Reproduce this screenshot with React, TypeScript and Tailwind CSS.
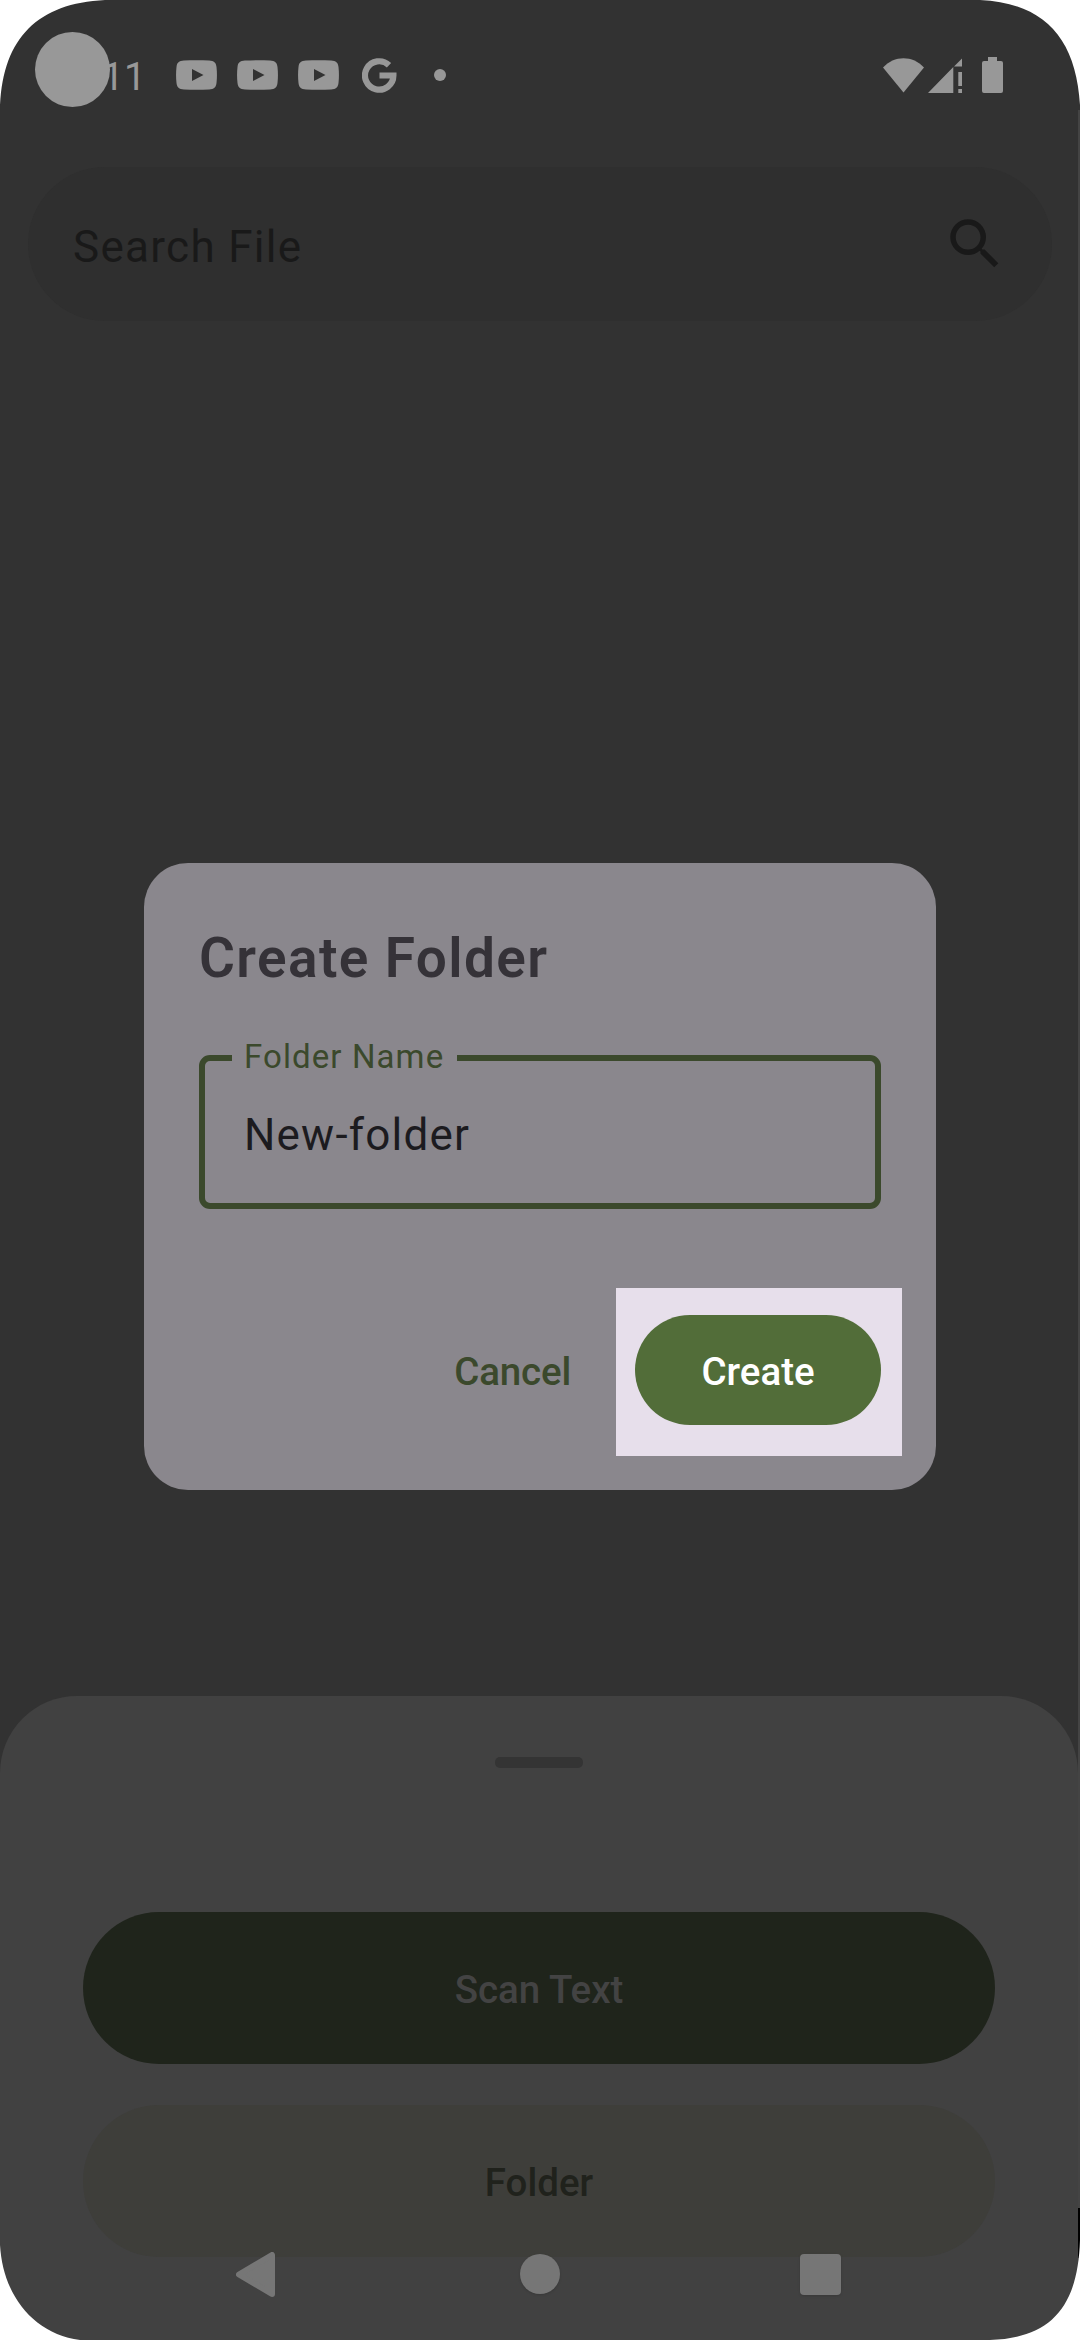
import type { ReactNode } from "react";

const YouTubeIcon = () => (
  <svg className="h-[30px] w-[41px]" viewBox="0 0 41 30" fill="#989898">
    <path
      fillRule="evenodd"
      d="M8 .6C16 0 25 0 33 .6c5 .3 7 2 7.500 6.400.6 5 .6 11 0 16-.5 4.400-2.500 6.100-7.500 6.400-8 .6-17 .6-25 0-5-.3-7-2-7.500-6.400-.6-5-.6-11 0-16C1 2.600 3 .9 8 .6ZM16 9v12l11.500-6Z"
    />
  </svg>
);

const GoogleIcon = () => (
  <svg className="h-[35px] w-[35px]" viewBox="0 0 35 35" fill="none" stroke="#989898" strokeWidth="6.200">
    <path d="M27 7.200A14.200 14.200 0 1 0 31.400 17.500H17.500" />
  </svg>
);

const StatusBar = () => (
  <header className="flex h-[167px] items-start pt-8 pl-[35px]">
    <div className="h-[75px] w-[75px] rounded-full bg-[#989898]" />
    <span className="mt-[22px] -ml-2 w-[45px] text-[39px] leading-[46px] text-[#989898]">11</span>
    <div className="mt-[28px] ml-[29px] flex gap-5">
      <YouTubeIcon />
      <YouTubeIcon />
      <YouTubeIcon />
    </div>
    <div className="mt-[26px] ml-[23px]">
      <GoogleIcon />
    </div>
    <div className="mt-[37px] ml-[37px] h-3 w-3 rounded-full bg-[#989898]" />
    <div className="mt-[25px] ml-auto flex pr-[77px]">
      <svg className="mt-px h-[35px] w-[41px]" viewBox="0 0 41 35" fill="#989898">
        <path d="M0 9.500C11-3 30-3 41 9.500L20.500 34.500Z" />
      </svg>
      <svg className="mt-px ml-1 h-[35px] w-[34px]" viewBox="0 0 34 35" fill="#989898">
        <path d="M0 35 25.300 9V35ZM26 8.500 34 .5v8ZM30.300 14H34v14h-3.700ZM30.300 31H34v4h-3.700Z" />
      </svg>
      <svg className="ml-5 h-[36px] w-[21px]" viewBox="0 0 21 36" fill="#989898">
        <path d="M6 0h9v4h4a2 2 0 0 1 2 2v28a2 2 0 0 1-2 2H2a2 2 0 0 1-2-2V6a2 2 0 0 1 2-2h4Z" />
      </svg>
    </div>
  </header>
);

const SearchBar = () => (
  <div className="mr-[28px] ml-[28px] flex h-[154px] items-center justify-between rounded-[77px] bg-[#2f2f2f] pr-[44px] pl-[45px] text-[#191919]">
    <span className="mt-[6px] text-[44px] tracking-[1.3px]">Search File</span>
    <svg className="h-[66px] w-[66px]" viewBox="0 0 24 24" fill="currentColor">
      <path d="M15.500 14h-.79l-.28-.27A6.471 6.471 0 0 0 16 9.500 6.500 6.500 0 1 0 9.500 16c1.610 0 3.090-.59 4.230-1.570l.27.28v.79l5 4.990L20.490 19l-4.990-5zm-6 0C7.010 14 5 11.990 5 9.500S7.010 5 9.500 5 14 7.010 14 9.500 11.990 14 9.500 14z" />
    </svg>
  </div>
);

const CreateFolderDialog = () => (
  <section className="mx-[144px] mt-[542px] flex h-[627px] flex-col rounded-[44px] bg-[#8a878d] px-[55px] pt-[63px]">
    <h1 className="h-[64px] text-[55px] leading-[64px] font-semibold tracking-[1.375px] text-[#353238]">
      Create Folder
    </h1>
    <div className="relative mt-[65px] flex h-[154px] w-[682px] items-center rounded-[11px] border-6 border-[#3b492c] pl-[39px]">
      <span className="mt-[6px] text-[44px] tracking-[1.2px] text-[#1c1b1f]">New-folder</span>
      <span className="absolute -top-[23px] left-[27px] h-[38px] w-[225px] bg-[#8a878d] pl-[12px] text-[33px] leading-[38px] tracking-[1.1px] whitespace-nowrap text-[#3b492c]">
        Folder Name
      </span>
    </div>
    <div className="mt-[79px] -mr-[21px] flex items-center justify-end text-[38.500px] font-medium">
      <button className="mr-[45px] tracking-[-0.2px] text-[#3b492c]">Cancel</button>
      <div className="h-[168px] w-[286px] bg-[#e7dfeb] pt-[27px] pl-[19px]">
        <button className="h-[110px] w-[246px] rounded-full bg-[#526d39] pt-[3px] text-white">Create</button>
      </div>
    </div>
  </section>
);

const SheetButton = ({ className, children }: { className: string; children: ReactNode }) => (
  <button className={`h-[152px] w-[912px] rounded-[76px] pt-[3px] text-[38.500px] font-medium ${className}`}>
    {children}
  </button>
);

const BottomSheet = () => (
  <section className="mt-[206px] flex h-[644px] w-[1078px] flex-col items-center rounded-t-[77px] bg-[#414141]">
    <div className="mt-[61px] h-[11px] w-[88px] rounded-[5px] bg-[#343434]" />
    <SheetButton className="mt-[144px] bg-[#1f241b] text-[#434343]">Scan Text</SheetButton>
    <SheetButton className="mt-[41px] bg-[#3e3e3a] text-[#20221c]">Folder</SheetButton>
    <nav className="-mt-[5px] flex w-full items-start pl-[236px]">
      <svg className="h-[45px] w-[39px]" viewBox="0 0 39 45">
        <path d="M36 3v39L3 22.500Z" fill="#767676" stroke="#767676" strokeWidth="6" strokeLinejoin="round" />
      </svg>
      <div className="mt-[2px] ml-[245px] h-10 w-10 rounded-full bg-[#767676] shadow-sm" />
      <div className="mt-[2px] ml-[240px] h-[41px] w-[41px] rounded-[4px] bg-[#767676] shadow-sm" />
    </nav>
  </section>
);

const ScreenEdges = () => (
  <svg className="pointer-events-none absolute inset-0" width="1080" height="2340" fill="#ffffff">
    <path d="M1078 110h2v2098h-2Z" fill="#444444" />
    <path d="M1078 2208h2v50h-2Z" fill="#000000" />
    <path d="M0 0H105C38 3 3 38 0 105Z" />
    <path d="M1080 0H980C1044 3 1076 38 1080 105Z" />
    <path d="M0 2340H80C34 2334 3 2296 0 2245Z" />
    <path d="M1080 2340H990C1050 2338 1078 2308 1080 2240Z" />
  </svg>
);

export default function App() {
  return (
    <main
      className="relative h-[2340px] w-[1080px] overflow-hidden bg-[#323232]"
      style={{ fontFamily: "Roboto, sans-serif" }}
    >
      <StatusBar />
      <SearchBar />
      <CreateFolderDialog />
      <BottomSheet />
      <ScreenEdges />
    </main>
  );
}
